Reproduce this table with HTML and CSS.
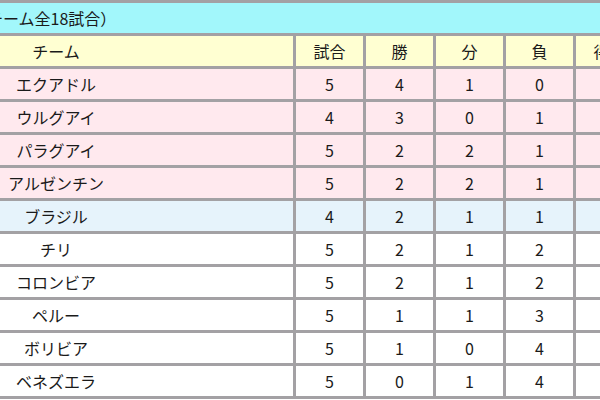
FILE: index.html
```html
<!DOCTYPE html>
<html lang="ja">
<head>
<meta charset="utf-8">
<link rel="stylesheet" href="styles.css">
</head>
<body>
<table class="standings">
  <colgroup>
    <col class="c-team">
    <col class="c-num">
    <col class="c-num">
    <col class="c-num">
    <col class="c-num">
    <col class="c-num">
  </colgroup>
  <tr class="title"><td colspan="6"><span class="title-text">チーム全18試合）</span></td></tr>
  <tr class="head"><th>チーム</th><th>試合</th><th>勝</th><th>分</th><th>負</th><th>得点</th></tr>
  <tr class="pink"><td>エクアドル</td><td>5</td><td>4</td><td>1</td><td>0</td><td></td></tr>
  <tr class="pink"><td>ウルグアイ</td><td>4</td><td>3</td><td>0</td><td>1</td><td></td></tr>
  <tr class="pink"><td>パラグアイ</td><td>5</td><td>2</td><td>2</td><td>1</td><td></td></tr>
  <tr class="pink"><td>アルゼンチン</td><td>5</td><td>2</td><td>2</td><td>1</td><td></td></tr>
  <tr class="blue"><td>ブラジル</td><td>4</td><td>2</td><td>1</td><td>1</td><td></td></tr>
  <tr><td>チリ</td><td>5</td><td>2</td><td>1</td><td>2</td><td></td></tr>
  <tr><td>コロンビア</td><td>5</td><td>2</td><td>1</td><td>2</td><td></td></tr>
  <tr><td>ペルー</td><td>5</td><td>1</td><td>1</td><td>3</td><td></td></tr>
  <tr><td>ボリビア</td><td>5</td><td>1</td><td>0</td><td>4</td><td></td></tr>
  <tr><td>ベネズエラ</td><td>5</td><td>0</td><td>1</td><td>4</td><td></td></tr>
</table>
</body>
</html>
```
FILE: styles.css
```css
html, body {
  margin: 0;
  padding: 0;
  overflow: hidden;
  background: #ffffff;
}

.standings {
  border-collapse: collapse;
  table-layout: fixed;
  width: 828px;
  margin-left: -184px;
  font-family: "Noto Sans CJK JP", "Noto Sans", sans-serif;
  font-size: 16px;
  color: #1a1a1a;
}

.c-team { width: 477px; }
.c-num { width: 70px; }

.standings td,
.standings th {
  border: 3px solid #a3a1a4;
  height: 30px;
  padding: 0;
  line-height: 30px;
  text-align: center;
  font-weight: normal;
  white-space: nowrap;
  overflow: hidden;
}

.title td {
  background: #a2f7fb;
  text-align: left;
  padding-left: 168px;
}

.head th { background: #ffffd2; }
.pink td { background: #ffe9ee; }
.blue td { background: #e6f3fb; }
```
